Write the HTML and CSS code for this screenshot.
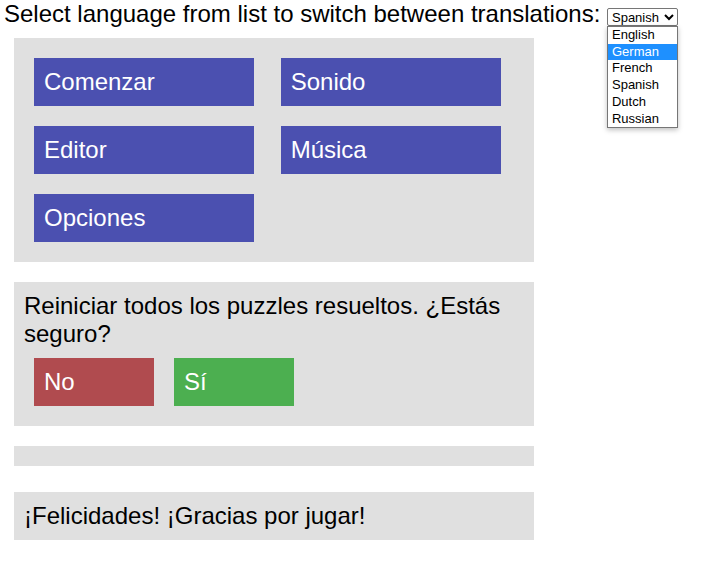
FILE: index.html
```html
<!DOCTYPE html>
<html lang="es">
<head>
<meta charset="utf-8">
<title>Translations</title>
<link rel="stylesheet" href="styles.css">
</head>
<body>
<div class="page">
  <div class="header">
    <span class="label">Select language from list to switch between translations:</span>
    <span class="picker">
      <select class="lang-select">
        <option>English</option>
        <option>German</option>
        <option>French</option>
        <option selected>Spanish</option>
        <option>Dutch</option>
        <option>Russian</option>
      </select>
      <div class="dropdown">
        <div class="opt">English</div>
        <div class="opt opt-active">German</div>
        <div class="opt">French</div>
        <div class="opt">Spanish</div>
        <div class="opt">Dutch</div>
        <div class="opt">Russian</div>
      </div>
    </span>
  </div>

  <div class="panel menu"><div class="btn btn-blue">Comenzar</div> <div class="btn btn-blue">Sonido</div> <div class="btn btn-blue">Editor</div> <div class="btn btn-blue">Música</div> <div class="btn btn-blue">Opciones</div></div>

  <div class="panel confirm">
    <div class="question">Reiniciar todos los puzzles resueltos. ¿Estás seguro?</div>
    <div class="choices">
      <div class="btn btn-small btn-red">No</div>
      <div class="btn btn-small btn-green">Sí</div>
    </div>
  </div>

  <div class="panel empty"></div>

  <div class="panel final">¡Felicidades! ¡Gracias por jugar!</div>
</div>
</body>
</html>
```

FILE: styles.css
```css
html, body {
  margin: 0;
  padding: 0;
  background: #ffffff;
}

.page {
  padding: 0 0 0 4px;
  font-family: "Liberation Sans", Arial, sans-serif;
  font-size: 24px;
  color: #000;
}

.header {
  height: 28px;
  line-height: 28px;
  white-space: nowrap;
}

.picker {
  position: relative;
  display: inline-block;
  vertical-align: baseline;
}

.lang-select {
  font-family: "Liberation Sans", Arial, sans-serif;
  font-size: 13px;
  width: 71px;
  height: 18px;
  padding: 0;
  margin: 0;
  border: 1px solid #767676;
  border-radius: 2px;
  background: #fff;
  color: #000;
}

.dropdown {
  position: absolute;
  left: 0;
  top: 26px;
  width: 69px;
  border: 1px solid #767676;
  background: #ffffff;
  box-shadow: 0 2px 5px rgba(0, 0, 0, 0.25);
  font-size: 13px;
  line-height: 16.7px;
  z-index: 5;
}

.opt {
  padding: 0 4px;
  color: #000;
}

.opt-active {
  background: #1e90ff;
  color: #fff;
}

.panel {
  width: 500px;
  margin: 10px 10px 20px 10px;
  padding: 10px;
  background: #e0e0e0;
}

.menu {
  margin-top: 10px;
  line-height: 0;
}

.btn {
  display: inline-block;
  box-sizing: border-box;
  width: 220px;
  height: 48px;
  margin: 10px;
  padding-left: 10px;
  line-height: 48px;
  font-size: 24px;
  color: #fff;
  vertical-align: top;
}

.btn-blue {
  background: #4b50b0;
}

.question {
  line-height: 28px;
}

.choices {
  display: flex;
}

.btn-small {
  width: 120px;
}

.btn-red {
  background: #b04b4f;
}

.btn-green {
  background: #4caf50;
}

.empty {
  height: 0;
}

.final {
  margin-top: 26px;
  line-height: 28px;
}
```
